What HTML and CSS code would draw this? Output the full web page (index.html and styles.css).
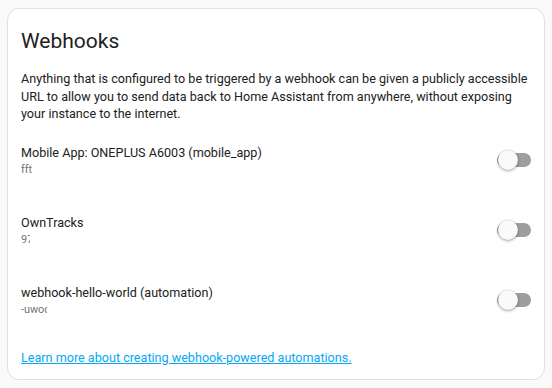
FILE: index.html
```html
<!DOCTYPE html>
<html>
<head>
<meta charset="utf-8">
<link rel="stylesheet" href="styles.css">
</head>
<body>
<div class="card">
  <h1 class="title">Webhooks</h1>
  <p class="desc">Anything that is configured to be triggered by a webhook can be given a publicly accessible URL to allow you to send data back to Home Assistant from anywhere, without exposing your instance to the internet.</p>
  <div class="list">
    <div class="item">
      <div class="text">
        <div class="primary">Mobile App: ONEPLUS A6003 (mobile_app)</div>
        <div class="secondary w1">fft</div>
      </div>
      <div class="switch"><span class="track"></span><span class="thumb"></span></div>
    </div>
    <div class="item">
      <div class="text">
        <div class="primary">OwnTracks</div>
        <div class="secondary w2">97</div>
      </div>
      <div class="switch"><span class="track"></span><span class="thumb"></span></div>
    </div>
    <div class="item">
      <div class="text">
        <div class="primary">webhook-hello-world (automation)</div>
        <div class="secondary w3">-uwoc</div>
      </div>
      <div class="switch"><span class="track"></span><span class="thumb"></span></div>
    </div>
  </div>
  <a class="link" href="#">Learn more about creating webhook-powered automations.</a>
</div>
</body>
</html>
```
FILE: styles.css
```css
html, body {
  margin: 0;
  padding: 0;
  background: #fafafa;
}
body {
  font-family: Roboto, "Liberation Sans", sans-serif;
  color: #212121;
  padding: 8px 7px 0 7px;
}
.card {
  width: 510px;
  height: 342px;
  background: #ffffff;
  border: 1px solid #e0e0e0;
  border-radius: 12px;
  padding: 16px 13px 12px 13px;
  display: flex;
  flex-direction: column;
}
.title {
  margin: 0;
  font-size: 21px;
  line-height: 32px;
  font-weight: 400;
  color: #212121;
}
.desc {
  margin: 13px 0 0 0;
  font-size: 12.6px;
  line-height: 17.5px;
}
.list {
  margin-top: 2px;
  display: flex;
  flex-direction: column;
}
.item {
  height: 70px;
  display: flex;
  align-items: center;
  justify-content: space-between;
}
.text {
  display: flex;
  flex-direction: column;
}
.primary {
  font-size: 12.6px;
  line-height: 20px;
}
.secondary {
  font-size: 10.8px;
  line-height: 14px;
  color: #727272;
  overflow: hidden;
  white-space: nowrap;
}
.w1 { width: 12px; }
.w2 { width: 9px; }
.w3 { width: 26px; }
.switch {
  position: relative;
  width: 34px;
  height: 20px;
}
.track {
  position: absolute;
  left: 0;
  top: 3px;
  width: 34px;
  height: 14px;
  border-radius: 7px;
  background: #9e9e9e;
}
.thumb {
  position: absolute;
  left: 1px;
  top: 0;
  width: 20px;
  height: 20px;
  border-radius: 50%;
  background: #fafafa;
  box-shadow: 0 1px 3px rgba(0,0,0,0.35), 0 0 1px rgba(0,0,0,0.2);
}
.link {
  margin-top: 13px;
  font-size: 12.6px;
  line-height: 20px;
  color: #03a9f4;
  text-decoration: underline;
  align-self: flex-start;
}
```
